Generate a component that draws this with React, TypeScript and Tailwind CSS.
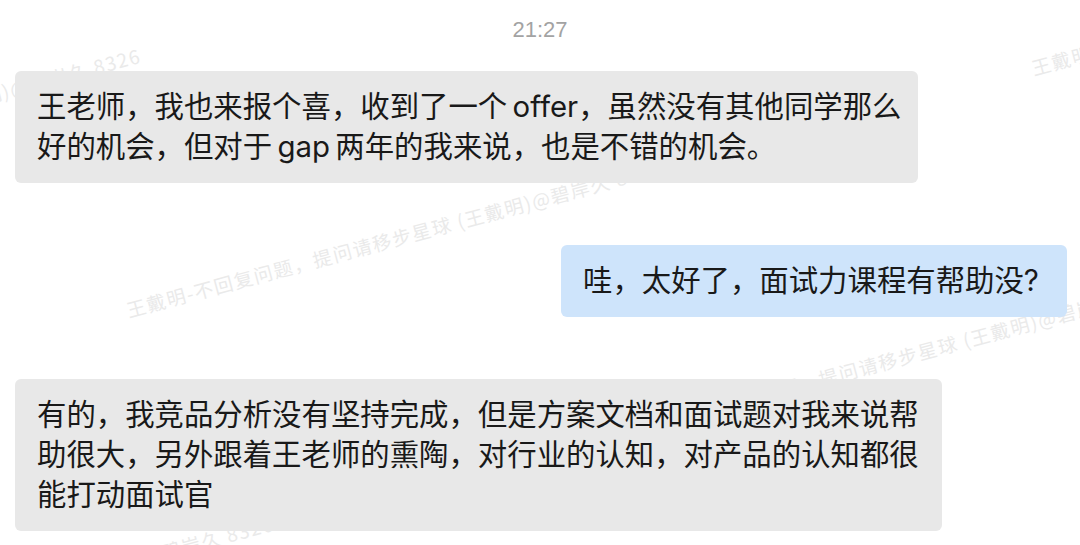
import React from 'react';

const WATERMARK = '王戴明-不回复问题，提问请移步星球 (王戴明)@碧岸久 8326';

const marks = [
  { left: 127, top: 310 },
  { left: 1032, top: 68 },
  { left: -395, top: 198 },
  { left: 633, top: 429 },
  { left: -262, top: 666 },
];

function Bubble({ lines, width, blue }: { lines: string[]; width: string; blue?: boolean }) {
  return (
    <div
      className={`${width} ${blue ? 'bg-[#cee4fb] ml-auto mr-[13px]' : 'bg-[#e8e8e8] ml-[15px]'} rounded-[6px] px-[22px] py-[16px] text-[29.4px] leading-[40px] text-[#191919]`}
    >
      {lines.map((line) => (
        <div key={line} className="whitespace-pre">
          {line}
        </div>
      ))}
    </div>
  );
}

export default function App() {
  return (
    <div className="relative w-[1080px] h-[545px] overflow-hidden bg-white font-['Inter','Noto_Sans_CJK_SC',sans-serif]">
      <div className="absolute inset-0 font-['Noto_Sans_CJK_SC',sans-serif]">
        {marks.map((m, i) => (
          <div
            key={i}
            className="absolute whitespace-nowrap origin-left rotate-[-15deg] text-[19px] leading-[20px] tracking-[1.5px] text-[#eaeaea]"
            style={{ left: m.left, top: m.top - 10 }}
          >
            {WATERMARK}
          </div>
        ))}
      </div>

      <div className="relative flex flex-col">
        <p className="pt-[19px] text-center text-[22px] leading-[22px] text-[#a3a3a3] font-['Liberation_Sans',sans-serif]">
          21:27
        </p>
        <div className="mt-[30px]">
          <Bubble
            width="w-[903px]"
            lines={[
              '王老师，我也来报个喜，收到了一个\u2009offer，虽然没有其他同学那么',
              '好的机会，但对于\u2009gap\u2009两年的我来说，也是不错的机会。',
            ]}
          />
        </div>
        <div className="mt-[62px] flex">
          <Bubble width="w-[506px]" blue lines={['哇，太好了，面试力课程有帮助没?']} />
        </div>
        <div className="mt-[62px]">
          <Bubble
            width="w-[927px]"
            lines={[
              '有的，我竞品分析没有坚持完成，但是方案文档和面试题对我来说帮',
              '助很大，另外跟着王老师的熏陶，对行业的认知，对产品的认知都很',
              '能打动面试官',
            ]}
          />
        </div>
      </div>
    </div>
  );
}
